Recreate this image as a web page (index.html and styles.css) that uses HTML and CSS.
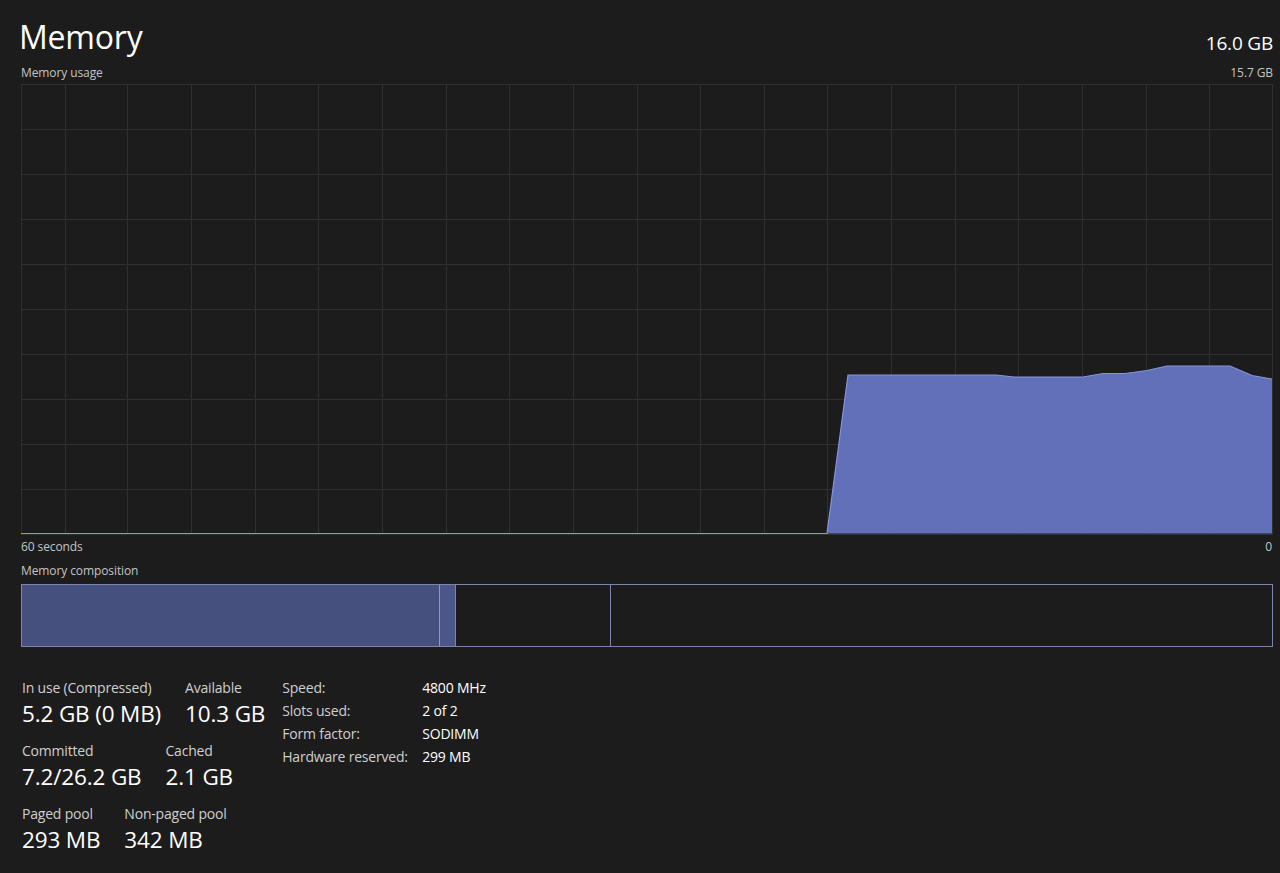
FILE: index.html
```html
<!DOCTYPE html>
<html lang="en">
<head>
<meta charset="utf-8">
<title>Memory</title>
<link rel="stylesheet" href="styles.css">
</head>
<body>
<main class="page">
  <header class="head">
    <h1 class="title">Memory</h1>
    <div class="total">16.0 GB</div>
  </header>
  <div class="caption-row top">
    <span>Memory usage</span>
    <span>15.7 GB</span>
  </div>
  <svg class="graph" width="1252" height="451" viewBox="0 0 1252 451">
    <g class="grid">
      <rect x="0.5" y="0.5" width="1251" height="450" fill="none"/>
      <path d="M44.5 0V450M106.5 0V450M170.5 0V450M234.5 0V450M297.5 0V450M361.5 0V450M425.5 0V450M488.5 0V450M552.5 0V450M616.5 0V450M679.5 0V450M743.5 0V450M806.5 0V450M870.5 0V450M934.5 0V450M997.5 0V450M1061.5 0V450M1125.5 0V450M1188.5 0V450"/>
      <path d="M0 45.5H1252M0 90.5H1252M0 135.5H1252M0 180.5H1252M0 225.5H1252M0 270.5H1252M0 315.5H1252M0 360.5H1252M0 405.5H1252"/>
    </g>
    <path class="area" d="M0 449.5 L806 449.5 L827 291 L975 291 L993 293 L1062 293 L1082 289.5 L1104 289.5 L1126 286.5 L1146 282 L1209 282 L1231 291.5 L1251 295 L1251 449.5 Z"/>
    <path class="line" d="M0 449.5 L806 449.5 L827 291 L975 291 L993 293 L1062 293 L1082 289.5 L1104 289.5 L1126 286.5 L1146 282 L1209 282 L1231 291.5 L1251 295"/>
  </svg>
  <div class="caption-row under">
    <span>60 seconds</span>
    <span>0</span>
  </div>
  <div class="caption-row comp-label">
    <span>Memory composition</span>
  </div>
  <div class="composition">
    <div class="seg inuse"></div>
    <div class="seg modified"></div>
    <div class="seg standby"></div>
    <div class="seg free"></div>
  </div>
  <section class="stats">
    <div class="stat-grid">
      <div class="stat-row">
        <div class="stat"><div class="label">In use (Compressed)</div><div class="value">5.2 GB (0 MB)</div></div>
        <div class="stat"><div class="label">Available</div><div class="value">10.3 GB</div></div>
      </div>
      <div class="stat-row">
        <div class="stat"><div class="label">Committed</div><div class="value">7.2/26.2 GB</div></div>
        <div class="stat"><div class="label">Cached</div><div class="value">2.1 GB</div></div>
      </div>
      <div class="stat-row">
        <div class="stat"><div class="label">Paged pool</div><div class="value">293 MB</div></div>
        <div class="stat"><div class="label">Non-paged pool</div><div class="value">342 MB</div></div>
      </div>
    </div>
    <dl class="props">
      <dt>Speed:</dt><dd>4800 MHz</dd>
      <dt>Slots used:</dt><dd>2 of 2</dd>
      <dt>Form factor:</dt><dd>SODIMM</dd>
      <dt>Hardware reserved:</dt><dd>299 MB</dd>
    </dl>
  </section>
</main>
</body>
</html>
```

FILE: styles.css
```css
html, body {
  margin: 0;
  padding: 0;
  background: #1c1c1c;
}
body {
  font-family: "Open Sans", "Noto Sans", "Liberation Sans", sans-serif;
  color: #ffffff;
  width: 1280px;
  height: 873px;
  overflow: hidden;
}
.page {
  padding: 0 7px 0 21px;
  display: flex;
  flex-direction: column;
}
.head {
  display: flex;
  justify-content: space-between;
  align-items: flex-end;
  height: 59px;
}
.title {
  margin: 0 0 0 -2px;
  font-size: 32px;
  font-weight: 400;
  line-height: 40px;
  padding-bottom: 2px;
  letter-spacing: -0.2px;
}
.total {
  font-size: 19px;
  line-height: 24px;
  padding-bottom: 4px;
  letter-spacing: -0.2px;
}
.caption-row {
  display: flex;
  justify-content: space-between;
  font-size: 12px;
  color: #c4c4c4;
  letter-spacing: -0.1px;
}
.caption-row.top {
  height: 26px;
  line-height: 14px;
  padding-top: 7px;
  box-sizing: border-box;
}
.graph {
  display: block;
  margin-top: -1px;
}
.grid rect, .grid path {
  stroke: #303030;
  stroke-width: 1;
  fill: none;
}
.area {
  fill: #6170b8;
}
.line {
  fill: none;
  stroke: #8694dc;
  stroke-width: 1.2;
}
.caption-row.under {
  margin-top: 4px;
  line-height: 16px;
}
.caption-row.under span:last-child { margin-right: 1px; }
.caption-row.comp-label {
  margin-top: 8px;
  line-height: 16px;
}
.composition {
  margin-top: 5px;
  height: 63px;
  width: 1252px;
  box-sizing: border-box;
  border: 1px solid #7e84ad;
  display: flex;
}
.seg {
  height: 100%;
}
.inuse {
  width: 417px;
  background: #46507e;
  border-right: 1px solid #8a96e4;
}
.modified {
  width: 15px;
  background: #4c5688;
  border-right: 1px solid #7e84ad;
}
.standby {
  width: 154px;
  border-right: 1px solid #7e84ad;
}
.free {
  flex: 1;
}
.stats {
  display: flex;
  gap: 17px;
  margin-top: 32px;
  margin-left: 1px;
}
.stat-grid {
  display: flex;
  flex-direction: column;
  gap: 14px;
}
.stat-row {
  display: flex;
  gap: 24px;
}
.label {
  font-size: 14px;
  line-height: 18px;
  color: #cfcfcf;
  letter-spacing: -0.2px;
}
.value {
  font-size: 22.5px;
  line-height: 28px;
  margin-top: 3px;
  letter-spacing: -0.15px;
}
.props {
  margin: 0;
  display: grid;
  grid-template-columns: 140px auto;
  row-gap: 5px;
  align-content: start;
  font-size: 14px;
  line-height: 18px;
  letter-spacing: -0.2px;
}
.props dt {
  color: #cfcfcf;
}
.props dd {
  margin: 0;
  color: #ffffff;
}
```
